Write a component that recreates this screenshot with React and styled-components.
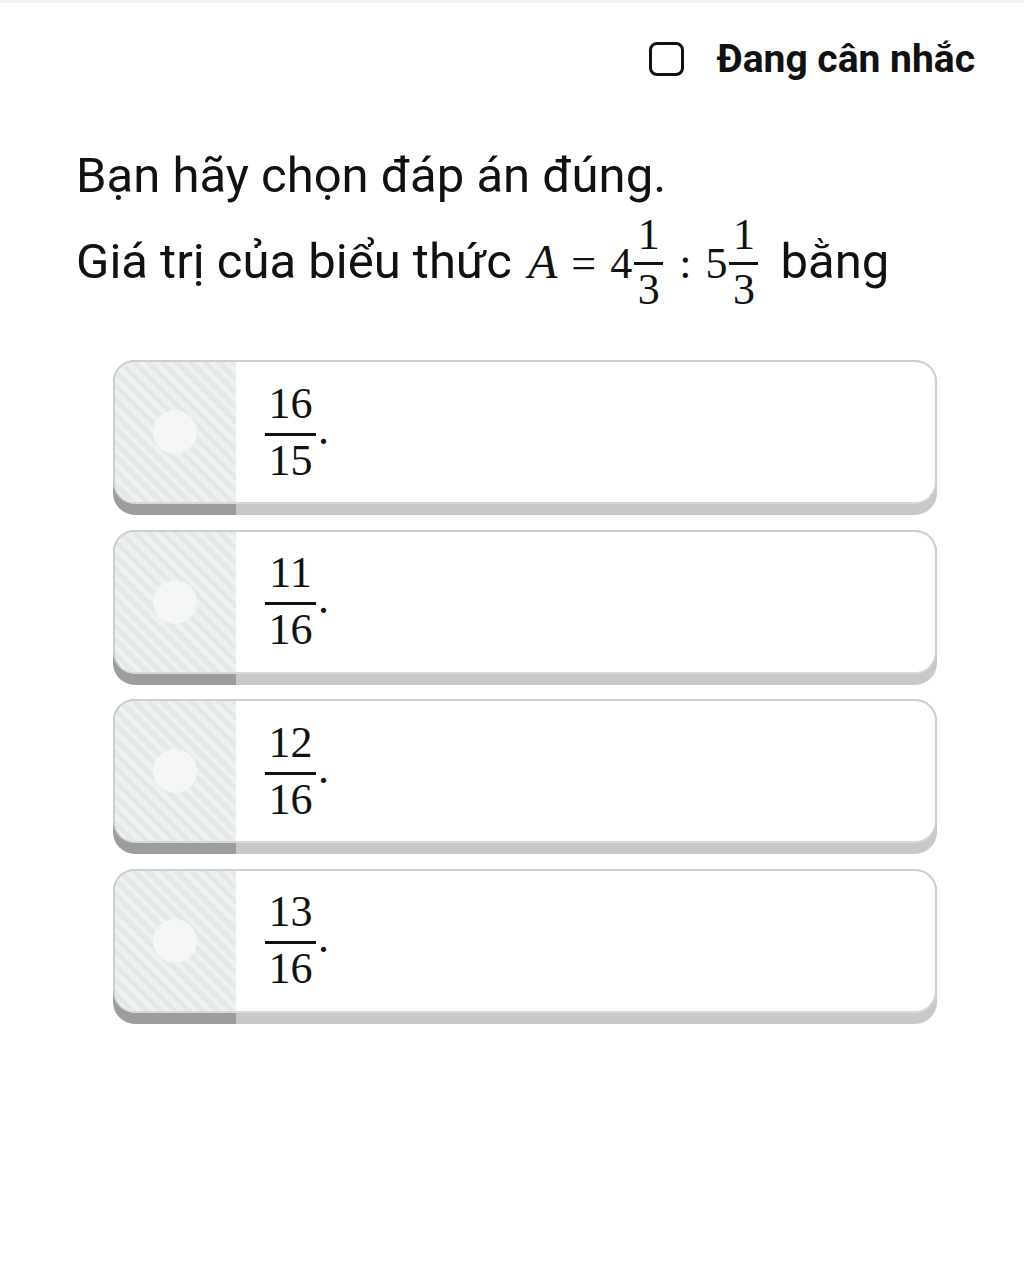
import React from 'react';
import styled, { createGlobalStyle } from 'styled-components';

const Global = createGlobalStyle`
  body {
    margin: 0;
    background: #fff;
    font-family: Roboto, "Noto Sans", sans-serif;
    color: #111;
  }
`;

const options = [
  ['16', '15'],
  ['11', '16'],
  ['12', '16'],
  ['13', '16'],
];

const App = () => {
  return (
    <Page>
      <Global />
      <TopStrip />
      <Header>
        <Checkbox />
        <HeaderLabel>Đang cân nhắc</HeaderLabel>
      </Header>
      <Question>
        <Line>Bạn hãy chọn đáp án đúng.</Line>
        <Line $second>
          Giá trị của biểu thức{' '}
          <QuestionMath>
            <Italic>A</Italic>
            <Op>=</Op>4
            <Frac num="1" den="3" />
            <Op>:</Op>5
            <Frac num="1" den="3" />
          </QuestionMath>{' '}
          bằng
        </Line>
      </Question>
      <Options>
        {options.map(([n, d]) => (
          <Card key={n + d}>
            <Face>
              <Side>
                <Dot />
              </Side>
              <Content>
                <Math>
                  <Frac num={n} den={d} option />.
                </Math>
              </Content>
            </Face>
          </Card>
        ))}
      </Options>
    </Page>
  );
};

const Frac = ({ num, den, option }) => (
  <FracBox $option={option}>
    <Num $option={option}>{num}</Num>
    <Bar />
    <Den>{den}</Den>
  </FracBox>
);

export default App;

const Page = styled.div`
  width: 1024px;
  min-height: 1280px;
`;

const TopStrip = styled.div`
  height: 3px;
  background: #f2f2f2;
`;

const Header = styled.div`
  display: flex;
  justify-content: flex-end;
  align-items: center;
  gap: 33px;
  padding: 33px 49px 0 0;
`;

const Checkbox = styled.div`
  width: 29px;
  height: 28px;
  border: 3.5px solid #111;
  border-radius: 8px;
`;

const HeaderLabel = styled.div`
  font-size: 39px;
  line-height: 46px;
  font-weight: 700;
`;

const Question = styled.div`
  padding: 64px 0 0 76px;
`;

const Line = styled.div`
  font-size: 49px;
  line-height: 60px;
  margin-top: ${(p) => (p.$second ? '7px' : '0')};
`;

const Math = styled.span`
  font-family: "Liberation Serif", "DejaVu Serif", serif;
  font-size: 44px;
  white-space: nowrap;
`;

const QuestionMath = styled(Math)`
  margin: 0 8px 0 4px;
`;

const Italic = styled.span`
  font-style: italic;
  font-size: 48px;
`;

const Op = styled.span`
  margin: 0 14px;
`;

const FracBox = styled.span`
  display: inline-flex;
  flex-direction: column;
  align-items: center;
  vertical-align: ${(p) => (p.$option ? '26px' : '29px')};
  margin: 0 2px;
`;

const Num = styled.span`
  line-height: 44px;
  margin-bottom: ${(p) => (p.$option ? '7px' : '5px')};
  padding: 0 3.5px;
`;

const Bar = styled.span`
  align-self: stretch;
  height: 3px;
  background: #111;
`;

const Den = styled.span`
  line-height: 44px;
  margin-top: 3px;
  padding: 0 3.5px;
`;

const Options = styled.div`
  display: flex;
  flex-direction: column;
  gap: 14.5px;
  margin: 48px 0 0 113px;
  width: 824px;
`;

const Card = styled.div`
  border-radius: 22px;
  padding-bottom: 11px;
  background: linear-gradient(to right, #9d9d9d 123px, #c8c8c8 123px);
`;

const Face = styled.div`
  display: flex;
  height: 140px;
  border: 2px solid #cfcfcf;
  border-bottom-color: #d8d8d8;
  border-radius: 22px;
  overflow: hidden;
  background: #fff;
`;

const Side = styled.div`
  width: 121px;
  flex-shrink: 0;
  display: flex;
  align-items: center;
  justify-content: center;
  padding-right: 2px;
  box-sizing: border-box;
  background: repeating-linear-gradient(
    45deg,
    #e3e8e8 0px,
    #e3e8e8 5px,
    #eef1f1 5px,
    #eef1f1 10px
  );
`;

const Dot = styled.div`
  width: 44px;
  height: 44px;
  border-radius: 50%;
  background: #f5f7f6;
`;

const Content = styled.div`
  display: flex;
  align-items: center;
  padding-left: 27px;
`;
